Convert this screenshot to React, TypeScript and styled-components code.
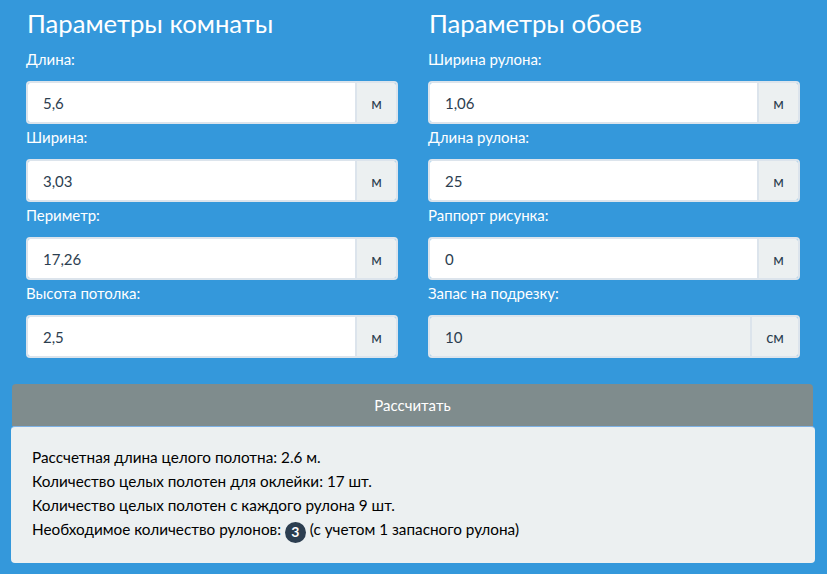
import React from "react";
import styled, { createGlobalStyle } from "styled-components";

const GlobalStyle = createGlobalStyle`
  html, body {
    margin: 0;
    padding: 0;
    background: #3498db;
  }
  body {
    font-family: Lato, "Open Sans", "Liberation Sans", sans-serif;
    font-size: 15px;
    color: #2c3e50;
  }
  * { box-sizing: border-box; }
`;

type Field = { label: string; value: string; unit: string; disabled?: boolean };

const room: Field[] = [
  { label: "Длина:", value: "5,6", unit: "м" },
  { label: "Ширина:", value: "3,03", unit: "м" },
  { label: "Периметр:", value: "17,26", unit: "м" },
  { label: "Высота потолка:", value: "2,5", unit: "м" },
];

const paper: Field[] = [
  { label: "Ширина рулона:", value: "1,06", unit: "м" },
  { label: "Длина рулона:", value: "25", unit: "м" },
  { label: "Раппорт рисунка:", value: "0", unit: "м" },
  { label: "Запас на подрезку:", value: "10", unit: "см", disabled: true },
];

const App = () => {
  return (
    <>
      <GlobalStyle />
      <Styled.Page>
        <Styled.Columns>
          <FieldColumn title="Параметры комнаты" fields={room} />
          <FieldColumn title="Параметры обоев" fields={paper} />
        </Styled.Columns>
        <Styled.Button>Рассчитать</Styled.Button>
        <Styled.Result>
          <Styled.Line>Рассчетная длина целого полотна: 2.6 м.</Styled.Line>
          <Styled.Line>Количество целых полотен для оклейки: 17 шт.</Styled.Line>
          <Styled.Line>Количество целых полотен с каждого рулона 9 шт.</Styled.Line>
          <Styled.Line>
            Необходимое количество рулонов: <Styled.Badge>3</Styled.Badge> (с учетом 1 запасного
            рулона)
          </Styled.Line>
        </Styled.Result>
      </Styled.Page>
    </>
  );
};

const FieldColumn = ({ title, fields }: { title: string; fields: Field[] }) => (
  <Styled.Column>
    <Styled.Heading>{title}</Styled.Heading>
    {fields.map((f) => (
      <Styled.Group key={f.label}>
        <Styled.Label>{f.label}</Styled.Label>
        <Styled.InputGroup>
          <Styled.Input defaultValue={f.value} disabled={f.disabled} />
          <Styled.Addon $wide={f.unit.length > 1}>{f.unit}</Styled.Addon>
        </Styled.InputGroup>
      </Styled.Group>
    ))}
  </Styled.Column>
);

const Styled = {
  Page: styled.div`
    padding: 0 12px 12px 11px;
    min-height: 574px;
  `,
  Columns: styled.div`
    display: grid;
    grid-template-columns: 1fr 1fr;
  `,
  Column: styled.div`
    padding: 0 15px 23px;
  `,
  Heading: styled.h3`
    margin: 0;
    padding-top: 7px;
    font-size: 25.7px;
    font-weight: 400;
    line-height: 32px;
    color: #fff;
    padding-left: 1px;
    margin-bottom: 10px;
  `,
  Group: styled.div`
    margin-bottom: 3px;
  `,
  Label: styled.div`
    color: #fff;
    font-size: 15px;
    line-height: 21px;
    margin-bottom: 11px;
  `,
  InputGroup: styled.div`
    display: flex;
    height: 43px;
    border: 2px solid #dce4ec;
    border-radius: 4px;
    overflow: hidden;
  `,
  Input: styled.input`
    flex: 1;
    min-width: 0;
    border: none;
    outline: none;
    padding: 0 15px;
    font-family: inherit;
    font-size: 15px;
    color: #2c3e50;
    background: #fff;
    &:disabled {
      background: #ecf0f1;
      color: #2c3e50;
    }
  `,
  Addon: styled.div<{ $wide?: boolean }>`
    width: ${(p) => (p.$wide ? "48px" : "41px")};
    display: flex;
    align-items: center;
    justify-content: center;
    background: #ecf0f1;
    border-left: 2px solid #dce4ec;
    font-size: 15px;
    color: #2c3e50;
  `,
  Button: styled.div`
    height: 42px;
    margin: 0 2px 0 1px;
    background: #7f8c8d;
    color: #fff;
    display: flex;
    align-items: center;
    justify-content: center;
    font-size: 15px;
    border-radius: 4px 4px 0 0;
  `,
  Result: styled.div`
    background: #ecf0f1;
    border-top: 1px solid #7fb2e5;
    border-radius: 4px;
    padding: 18px 20px 20px 21px;
  `,
  Line: styled.div`
    line-height: 24px;
    font-size: 15.3px;
    color: #000;
  `,
  Badge: styled.span`
    display: inline-flex;
    align-items: center;
    justify-content: center;
    min-width: 21px;
    height: 21px;
    border-radius: 11px;
    background: #2c3e50;
    color: #fff;
    font-size: 14px;
    font-weight: 700;
    vertical-align: -2px;
  `,
};

export default App;
